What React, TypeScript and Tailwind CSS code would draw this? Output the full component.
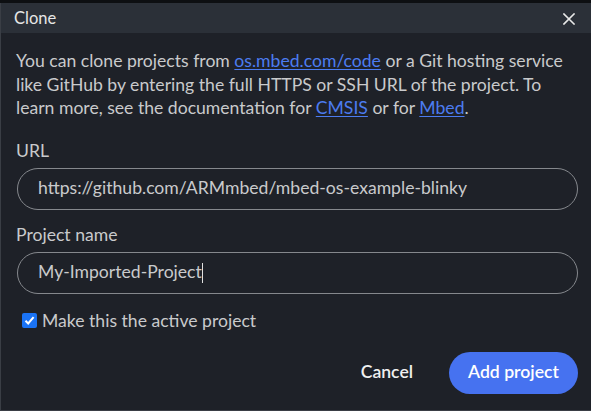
import React from "react";

export default function App() {
  return (
    <div
      className="w-[591px] h-[411px] bg-[#0d0f12] pt-[3px] flex flex-col overflow-hidden"
      style={{ fontFamily: "Lato, 'Noto Sans', sans-serif" }}
    >
      <div className="flex-1 flex flex-col border-l border-b border-[#3a3e45]">
        <div className="h-[30px] shrink-0 bg-[#2b3038] pl-[13px] pr-[16px] flex items-center justify-between">
          <span className="text-[16.5px] text-[#e6e6e6] leading-none">Clone</span>
          <svg width="12" height="12" viewBox="0 0 12 12" className="mt-[1px]">
            <path d="M1 1L11 11M11 1L1 11" stroke="#e8e8e8" strokeWidth="1.6" strokeLinecap="square" />
          </svg>
        </div>
        <div className="flex-1 bg-[#1e2128] pl-[15px] pr-[13px] pt-[16px] flex flex-col">
          <p className="text-[17.6px] leading-[23.5px] text-[#c9cacc]">
            You can clone projects from{" "}
            <span className="text-[#4c7cf0] underline underline-offset-2">os.mbed.com/code</span> or a Git
            hosting service like GitHub by entering the full HTTPS or SSH URL of the project. To learn more,
            see the documentation for{" "}
            <span className="text-[#4c7cf0] underline underline-offset-2">CMSIS</span> or for{" "}
            <span className="text-[#4c7cf0] underline underline-offset-2">Mbed</span>.
          </p>
          <div className="mt-[19px] text-[17.6px] leading-[24px] text-[#c9cacc]">URL</div>
          <div className="mt-[5px] ml-[1px] h-[42px] rounded-full border border-[#85888d] flex items-center pl-[20px] text-[17.6px] text-[#c9cacc]">
            https://github.com/ARMmbed/mbed-os-example-blinky
          </div>
          <div className="mt-[13px] text-[17.6px] leading-[24px] text-[#c9cacc]">Project name</div>
          <div className="mt-[5px] ml-[1px] h-[42px] rounded-full border border-[#85888d] flex items-center pl-[20px] text-[17.6px] text-[#c9cacc]">
            My-Imported-Project
            <span className="inline-block w-[1px] h-[20px] bg-[#e0e0e0]"></span>
          </div>
          <div className="mt-[15px] ml-[6px] flex items-center gap-[5px] text-[17.6px] leading-[24px] text-[#c9cacc]">
            <span className="w-[15px] h-[15px] rounded-[2px] bg-[#1a73f5] flex items-center justify-center">
              <svg width="11" height="11" viewBox="0 0 11 11">
                <path d="M1.5 5.8L4.2 8.5L9.6 2.2" stroke="#ffffff" strokeWidth="2" fill="none" />
              </svg>
            </span>
            <span>Make this the active project</span>
          </div>
          <div className="mt-[19px] flex justify-end items-center">
            <button className="h-[42px] px-[17px] text-[17.6px] font-semibold text-[#f0f0f0] mr-[19px]">
              Cancel
            </button>
            <button className="h-[42px] w-[129px] rounded-full bg-[#4672f0] text-[17.6px] font-semibold text-white">
              Add project
            </button>
          </div>
        </div>
      </div>
    </div>
  );
}
